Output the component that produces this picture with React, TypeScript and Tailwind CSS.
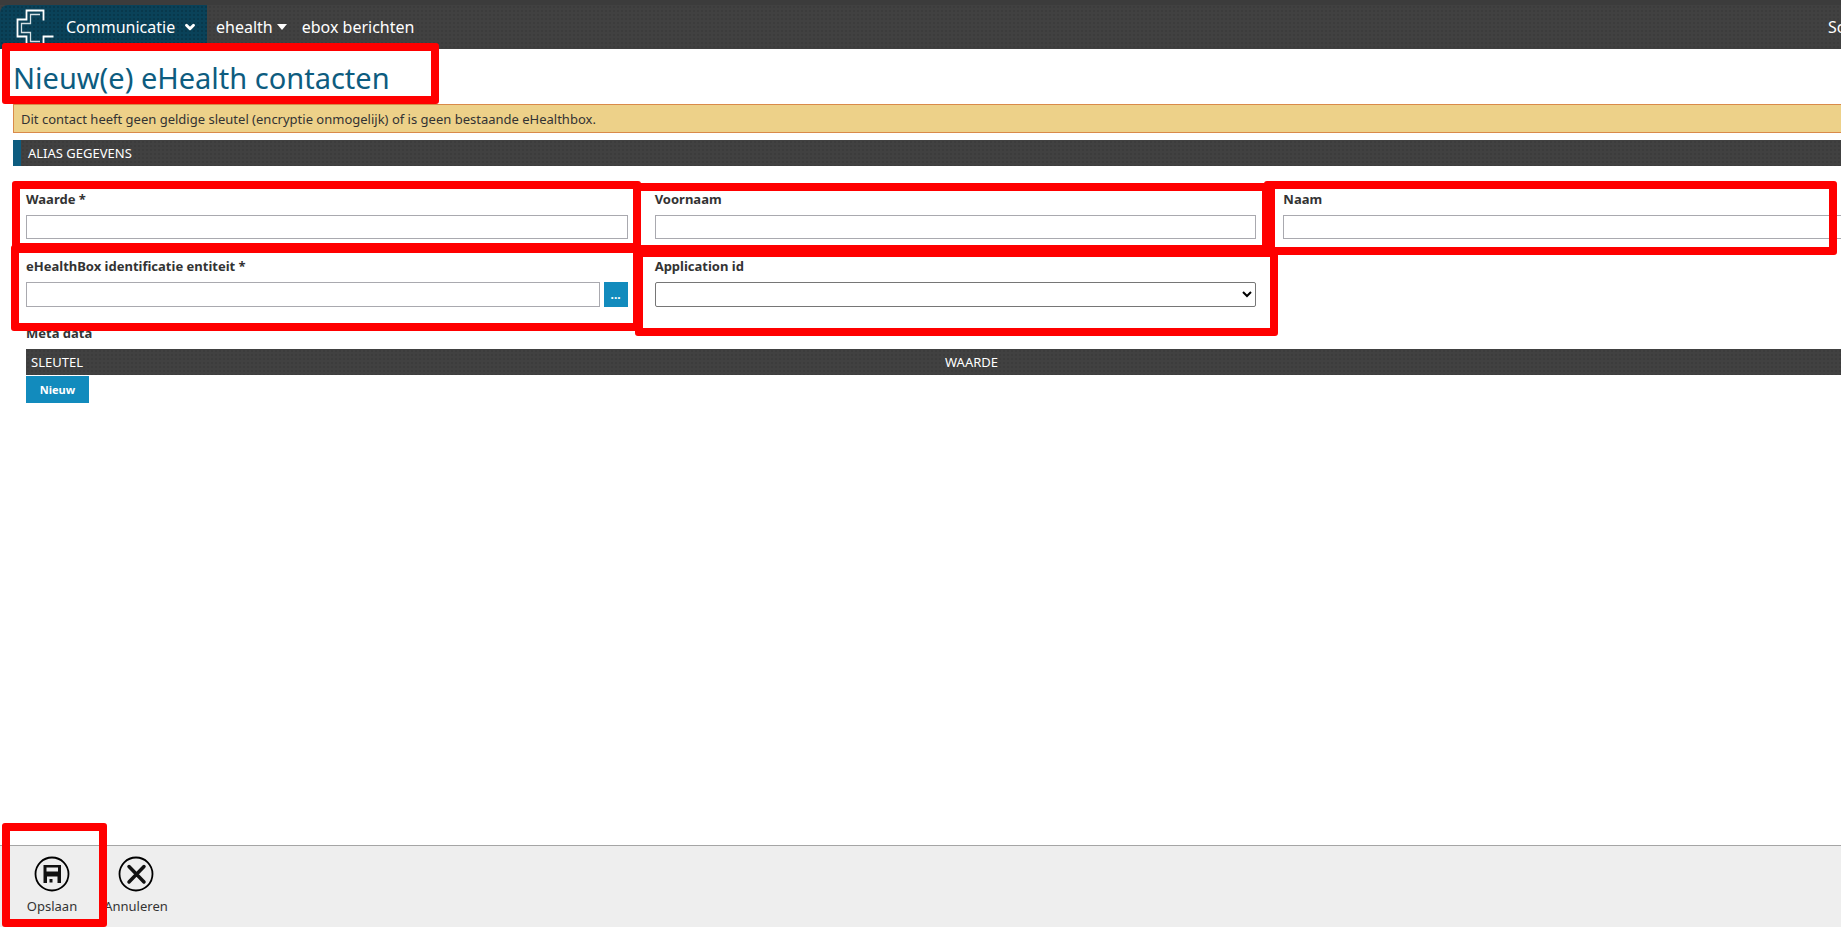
import type { ReactNode } from 'react';
import { ChevronDown } from 'lucide-react';

const DARK_TEXTURE =
  'bg-[#414141] bg-[image:radial-gradient(#3c3c3c_1px,transparent_1px)] bg-[size:4px_4px]';
const BLUE_TEXTURE =
  'bg-[#0a4259] bg-[image:radial-gradient(#08384c_1px,transparent_1px)] bg-[size:4px_4px]';

// Highlight frames drawn over the form
const FRAMES = [
  'left-[2px] top-[43px] w-[437px] h-[61px] border-8',
  'left-[12px] top-[181px] w-[629px] h-[70px] border-8',
  'left-[11px] top-[245px] w-[630px] h-[86px] border-8',
  'left-[633px] top-[183px] w-[637px] h-[70px] border-8',
  'left-[635px] top-[249px] w-[643px] h-[87px] border-8',
  'left-[1264px] top-[181px] w-[573px] h-[74px] border-8 border-l-11',
  'left-[2px] top-[823px] w-[105px] h-[104px] border-8',
];

interface FieldProps {
  id: string;
  label: string;
  children: ReactNode;
}

function Field({ id, label, children }: FieldProps) {
  return (
    <div className="h-[67px]">
      <label htmlFor={id} className="block h-[25px] text-[13px] leading-[18px] font-bold">
        {label}
      </label>
      <div className="flex gap-1">{children}</div>
    </div>
  );
}

function TextInput({ id, className = 'h-6' }: { id: string; className?: string }) {
  return (
    <input
      id={id}
      type="text"
      className={`min-w-0 flex-1 border border-[#a9a9af] bg-white px-1 text-[13px] ${className}`}
    />
  );
}

function Logo() {
  return (
    <svg width="39" height="37" viewBox="16 7 39 37" fill="none" stroke="#fff" aria-hidden="true">
      <path strokeWidth="1.8" d="M43.5 18.5V8.5h-17v9h-9v17h9V44M53.5 34.5h-10V44" />
      <path
        strokeWidth="1.3"
        stroke="#d5e0e4"
        d="M40 12.5h-9.5v9h-9v9h9v9H40"
      />
    </svg>
  );
}

function SaveIcon() {
  return (
    <svg width="36" height="36" viewBox="0 0 36 36" aria-hidden="true">
      <circle cx="18" cy="18" r="16.5" fill="none" stroke="#000" strokeWidth="1.8" />
      <path
        fill="#111"
        fillRule="evenodd"
        d="M9.5 9h17.5v18h-3.500v-6.500H13v6.500H9.500zM12.500 11.500v4h11.500v-4zM15.500 23h3v3.500h-3z"
      />
    </svg>
  );
}

function CancelIcon() {
  return (
    <svg width="36" height="36" viewBox="0 0 36 36" fill="none" stroke="#000" aria-hidden="true">
      <circle cx="18" cy="18" r="16.5" strokeWidth="1.8" />
      <path d="M11 10.500l15 15.500M26 10.500L11 26" stroke="#111" strokeWidth="3.500" strokeLinecap="round" />
    </svg>
  );
}

export default function App() {
  return (
    <div className="relative flex min-h-screen flex-col overflow-hidden bg-white font-['Noto_Sans','Open_Sans',sans-serif] text-[13px] text-[#333]">
      {/* Navigation */}
      <header className="bg-[#3c3c3c] pt-[5px]">
        <nav className={`flex h-11 overflow-hidden text-base text-white ${DARK_TEXTURE}`}>
          <button
            type="button"
            className={`flex w-[207px] items-center rounded-tl-lg pl-4 ${BLUE_TEXTURE}`}
          >
            <Logo />
            <span className="ml-[11px]">Communicatie</span>
            <ChevronDown className="ml-2 size-3.5" strokeWidth={5} />
          </button>
          <a href="#ehealth" className="ml-[9px] flex items-center">
            ehealth
            <svg width="10" height="6" viewBox="0 0 10 6" fill="#fff" className="ml-1" aria-hidden="true">
              <path d="M0 0h10L5 6z" />
            </svg>
          </a>
          <a href="#ebox" className="ml-[15px] flex items-center">
            ebox berichten
          </a>
          <a href="#search" className="ml-auto flex w-[13px] items-center whitespace-nowrap">
            Sc
          </a>
        </nav>
      </header>

      {/* The form runs on past the right edge of the window */}
      <main className="w-[calc(100%+57px)] flex-1 pl-[13px]">
        <h1 className="flex h-[55px] items-center pt-0.5 text-[29px] text-[#0d5c7f]">
          Nieuw(e) eHealth contacten
        </h1>
        <p
          role="alert"
          className="flex h-[29px] items-center border border-[#d98a4a] bg-[#edd189] px-[7px] pt-0.5"
        >
          Dit contact heeft geen geldige sleutel (encryptie onmogelijk) of is geen bestaande eHealthbox.
        </p>
        <h2
          className={`mt-[7px] flex h-[26px] items-center border-l-8 border-[#0d5c7f] pt-0.5 pl-[7px] text-white ${DARK_TEXTURE}`}
        >
          ALIAS GEGEVENS
        </h2>

        <form className="px-[13px] pt-6">
          <div className="grid grid-cols-3 gap-x-[27px]">
            <Field id="waarde" label="Waarde *">
              <TextInput id="waarde" />
            </Field>
            <Field id="voornaam" label="Voornaam">
              <TextInput id="voornaam" />
            </Field>
            <Field id="naam" label="Naam">
              <TextInput id="naam" />
            </Field>
            <Field id="entiteit" label="eHealthBox identificatie entiteit *">
              <TextInput id="entiteit" className="h-[25px]" />
              <button type="button" className="h-[25px] w-6 bg-[#128bbd] text-xs font-bold text-white">
                ...
              </button>
            </Field>
            <Field id="application" label="Application id">
              <select
                id="application"
                className="h-[25px] flex-1 rounded-xs border border-[#767676] bg-white text-[13px] text-black"
              />
            </Field>
          </div>

          <table className="w-full table-fixed text-left">
            <caption className="h-[25px] text-left text-[13px] leading-[18px] font-bold">Meta data</caption>
            <thead>
              <tr className={`h-[26px] text-white ${DARK_TEXTURE}`}>
                <th className="w-[914px] pt-0.5 pl-[5px] font-normal">SLEUTEL</th>
                <th className="pt-0.5 pl-[5px] font-normal">WAARDE</th>
              </tr>
            </thead>
          </table>
          <button type="button" className="mt-px h-[27px] w-[63px] bg-[#128bbd] pt-0.5 text-[11px] font-bold text-white">
            Nieuw
          </button>
        </form>
      </main>

      {/* Actions */}
      <footer className="flex h-[82px] border-t border-[#a5a5a5] bg-[#eee] pt-[10px] pl-[10px]">
        <button type="button" className="flex w-[84px] flex-col items-center">
          <SaveIcon />
          <span className="mt-[5px] leading-[18px]">Opslaan</span>
        </button>
        <button type="button" className="flex w-[84px] flex-col items-center">
          <CancelIcon />
          <span className="mt-[5px] leading-[18px]">Annuleren</span>
        </button>
      </footer>

      {FRAMES.map((frame) => (
        <div key={frame} className={`pointer-events-none absolute rounded-[3px] border-[#f00] ${frame}`} />
      ))}
    </div>
  );
}
